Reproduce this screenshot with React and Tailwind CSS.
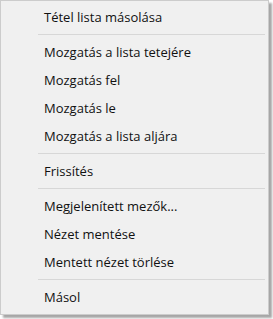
const groups = [
  ['Tétel lista másolása'],
  ['Mozgatás a lista tetejére', 'Mozgatás fel', 'Mozgatás le', 'Mozgatás a lista aljára'],
  ['Frissítés'],
  ['Megjelenített mezők...', 'Nézet mentése', 'Mentett nézet törlése'],
  ['Másol'],
];

const App = () => {
  return (
    <div className="w-[273px] h-[319px] bg-white">
      <div
        className="w-[269px] border border-[#cccccc] bg-[#f0f0f0] pt-[2px] pb-[3px] px-[2px] shadow-[3px_3px_2px_rgba(0,0,0,0.35)]"
        style={{ fontFamily: '"Segoe UI", "Open Sans", sans-serif' }}
      >
        {groups.map((items, gi) => (
          <div key={gi}>
            {gi > 0 && (
              <div className="h-[7px] flex items-center pl-[35px] pr-[1px]">
                <div className="h-px w-full bg-[#d7d7d7]" />
              </div>
            )}
            {items.map((label) => (
              <div
                key={label}
                className="h-[28px] flex items-center pl-[41px] text-[13px] text-[#111] leading-none"
              >
                {label}
              </div>
            ))}
          </div>
        ))}
      </div>
    </div>
  );
};

export default App;
